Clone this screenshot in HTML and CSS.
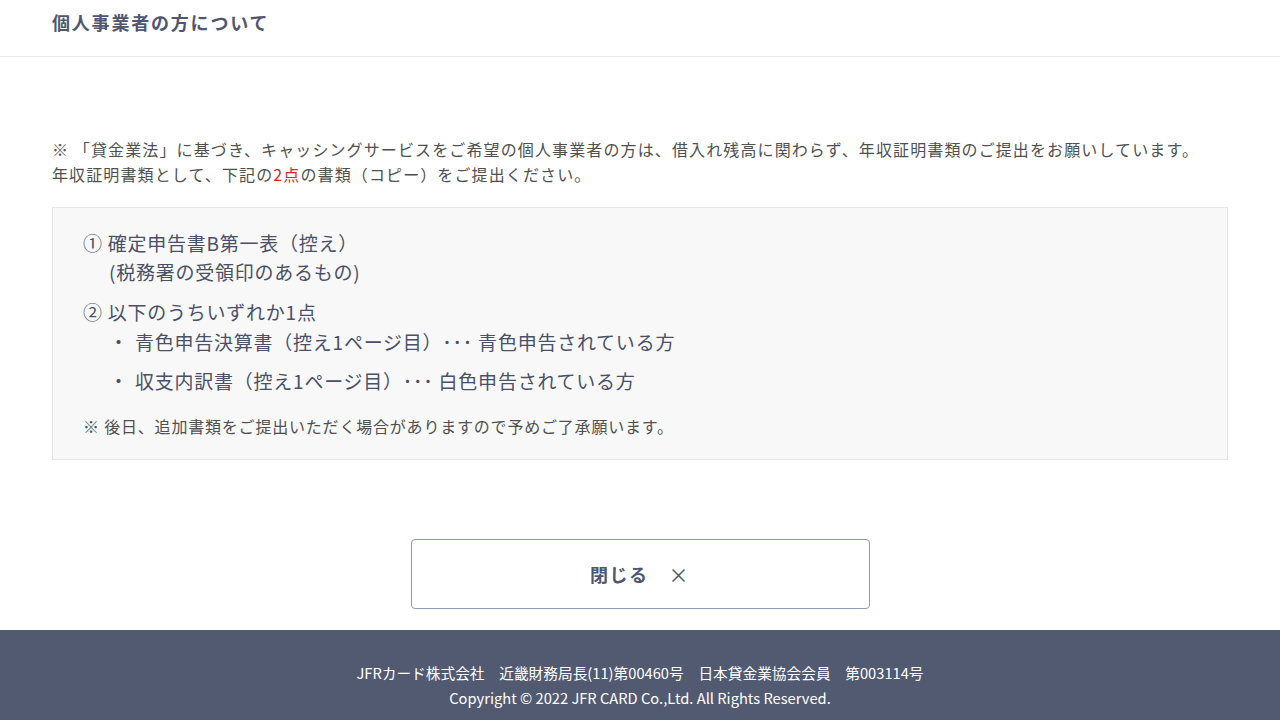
FILE: index.html
```html
<!DOCTYPE html>
<html lang="ja">
<head>
<meta charset="utf-8">
<title>個人事業者の方について</title>
<link rel="stylesheet" href="styles.css">
</head>
<body>
<header class="page-head">
  <h1 class="page-title">個人事業者の方について</h1>
</header>
<main class="content">
  <p class="lead">※ 「貸金業法」に基づき、キャッシングサービスをご希望の個人事業者の方は、借入れ残高に関わらず、年収証明書類のご提出をお願いしています。<br>年収証明書類として、下記の<span class="red">2点</span>の書類（コピー）をご提出ください。</p>
  <div class="docs">
    <div class="item">
      <p class="item-head"><span class="num">①</span>確定申告書B第一表（控え）</p>
      <p class="item-sub">(税務署の受領印のあるもの)</p>
    </div>
    <div class="item">
      <p class="item-head"><span class="num">②</span>以下のうちいずれか1点</p>
      <ul class="bullets">
        <li><span class="dot">・</span>青色申告決算書（控え1ページ目）･･･ 青色申告されている方</li>
        <li><span class="dot">・</span>収支内訳書（控え1ページ目）･･･ 白色申告されている方</li>
      </ul>
    </div>
    <p class="note">※ 後日、追加書類をご提出いただく場合がありますので予めご了承願います。</p>
  </div>
  <div class="actions">
    <button class="close-btn" type="button">閉じる<span class="x">×</span></button>
  </div>
</main>
<footer class="foot">
  <p>JFRカード株式会社　近畿財務局長(11)第00460号　日本貸金業協会会員　第003114号</p>
  <p>Copyright © 2022 JFR CARD Co.,Ltd. All Rights Reserved.</p>
</footer>
</body>
</html>
```

FILE: styles.css
```css
* { box-sizing: border-box; }
html, body { margin: 0; padding: 0; }
body {
  font-family: "Noto Sans CJK JP", "Noto Sans", sans-serif;
  background: #fff;
  color: #555;
  width: 1280px;
  height: 720px;
  overflow: hidden;
  display: flex;
  flex-direction: column;
}
p { margin: 0; }
.page-head {
  height: 57px;
  border-bottom: 1px solid #e6e6e6;
  padding: 8px 52px 0;
}
.page-title {
  margin: 0;
  font-size: 18px;
  font-weight: 700;
  letter-spacing: 0.1em;
  color: #4f5670;
  line-height: 28px;
}
.content {
  flex: 1;
  padding: 80px 52px 0;
}
.lead {
  font-size: 16px;
  letter-spacing: 0.07em;
  line-height: 25px;
  color: #505050;
}
.red { color: #e2231a; }
.docs {
  margin-top: 20px;
  background: #f8f8f8;
  border: 1px solid #e4e4e4;
  padding: 20px 30px 20px;
  color: #4a5068;
  height: 253px;
}
.item-head, .item-sub, .bullets li {
  font-size: 19px;
  letter-spacing: 0.04em;
  line-height: 29px;
}
.num { margin-right: 5px; }
.item-sub { padding-left: 26px; }
.item + .item { margin-top: 11px; }
.bullets {
  list-style: none;
  margin: 0;
  padding: 1px 0 0 26px;
}
.bullets li + li { margin-top: 10px; }
.dot { display: inline-block; width: 26px; }
.note {
  margin-top: 19px;
  font-size: 16px;
  letter-spacing: 0.05em;
  line-height: 25px;
  color: #505050;
}
.actions {
  display: flex;
  justify-content: center;
  margin-top: 79px;
}
.close-btn {
  width: 459px;
  height: 70px;
  background: #fff;
  border: 1px solid #8e9ab8;
  border-radius: 4px;
  font-family: inherit;
  font-size: 18px;
  font-weight: 700;
  letter-spacing: 0.08em;
  color: #4f5670;
  display: flex;
  align-items: center;
  justify-content: center;
  padding: 0;
}
.x {
  margin-left: 20px;
  font-weight: 400;
  font-size: 20px;
}
.foot {
  height: 90px;
  background: #525a72;
  color: #fff;
  text-align: center;
  font-size: 14.7px;
  line-height: 25px;
  padding-top: 30px;
}
```
